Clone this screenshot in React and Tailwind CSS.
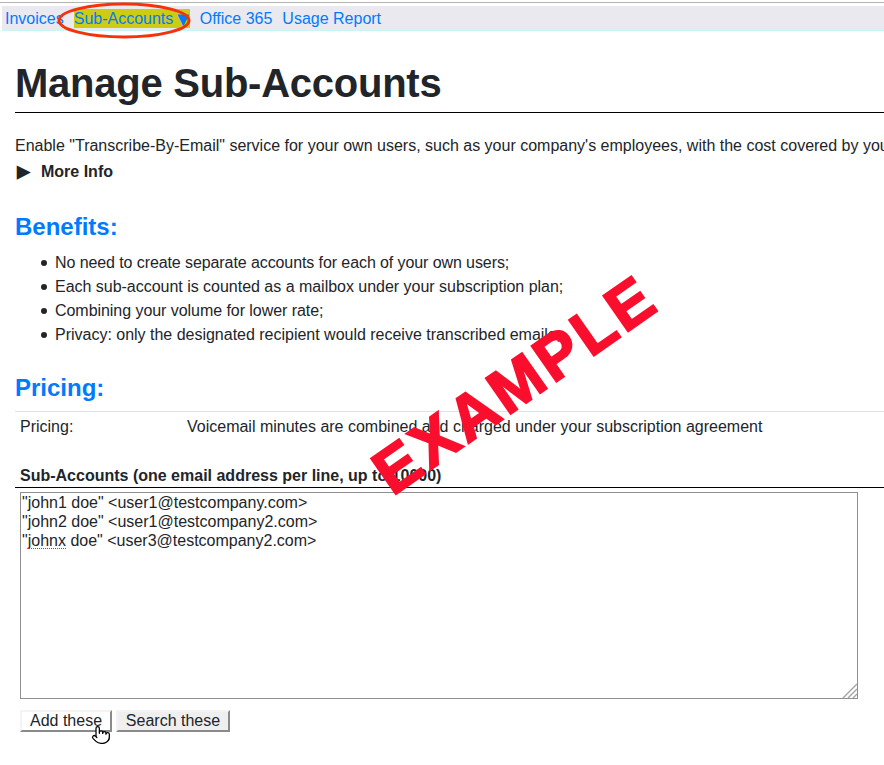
import { Pointer } from 'lucide-react'

const benefits = [
  { text: 'No need to create separate accounts for each of your own users;', fit: 'tracking-[-0.09px]' },
  { text: 'Each sub-account is counted as a mailbox under your subscription plan;', fit: 'tracking-[-0.02px]' },
  { text: 'Combining your volume for lower rate;', fit: 'tracking-[-0.05px]' },
  { text: 'Privacy: only the designated recipient would receive transcribed emails;', fit: 'tracking-[-0.01px]' },
]

const addresses = `"john1 doe" <user1@testcompany.com>
"john2 doe" <user1@testcompany2.com>
"johnx doe" <user3@testcompany2.com>`

export default function App() {
  return (
    <div className="relative h-[765px] w-[884px] overflow-hidden bg-white font-['Liberation_Sans',Arial,sans-serif] text-base text-[#212529]">
      <div className="mt-[2px] h-[1px] bg-[#b5b5ae]" />
      <nav className="ml-[2px] mt-[3px] flex h-[25px] items-center whitespace-nowrap border-b border-[#c8f5f8] bg-[#e9e9ef] pl-[3px] text-[#007bff]">
        <a className="mt-[1px]">Invoices</a>
        <a className="ml-[10px] flex h-[19px] w-[116px] items-center bg-[#cccc14] pt-[2px] leading-none">
          Sub-Accounts<span className="text-[20px]">▼</span>
        </a>
        <a className="ml-[10px] mt-[1px]">Office 365</a>
        <a className="ml-[10px] mt-[1px]">Usage Report</a>
      </nav>

      <main className="pl-[15px]">
        <h1 className="mt-[28px] border-b border-black pb-[5px] text-[40px] leading-[48px] font-bold tracking-[-0.25px]">Manage Sub-Accounts</h1>
        <p className="mt-[21px] whitespace-nowrap leading-[24px]">
          Enable "Transcribe-By-Email" service for your own users, such as your company's employees, with the cost covered by your account.
        </p>
        <div className="mt-[2px] flex h-[24px] items-center font-bold">
          <span className="ml-[2px] w-[24px] text-[17px]">▶</span>
          More Info
        </div>

        <h3 className="mt-[29px] text-2xl leading-[28px] font-bold text-[#007bff]">Benefits:</h3>
        <ul className="mt-[10px] ml-[26px]">
          {benefits.map((item) => (
            <li key={item.text} className={`flex h-[24px] items-center ${item.fit}`}>
              <span className="mr-[8px] h-[6px] w-[6px] rounded-full bg-[#212529]" />
              {item.text}
            </li>
          ))}
        </ul>

        <h3 className="mt-[27px] text-2xl leading-[28px] font-bold text-[#007bff]">Pricing:</h3>
        <div className="mt-[9px] flex h-[30px] items-center border-t border-[#dee2e6] pl-[5px]">
          <span className="w-[167px]">Pricing:</span>
          <span>Voicemail minutes are combined and charged under your subscription agreement</span>
        </div>

        <div className="mt-[24px] border-b border-black pl-[5px] leading-[22px] font-bold">
          Sub-Accounts (one email address per line, up to 10000)
        </div>

        <div className="relative ml-[5px] mt-[4px] w-[838px]">
          <textarea
            defaultValue={addresses}
            spellCheck={false}
            className="block h-[207px] w-[838px] resize-none border border-[#8f8f8f] px-[1px] py-0 text-base leading-[19px] text-[#212529] outline-none"
          />
          <span className="absolute left-[8px] top-[56px] h-0 w-[38px] border-b border-dotted border-[#d03030]" />
          <svg className="absolute bottom-[1px] right-[1px]" width="15" height="15" viewBox="0 0 15 15" stroke="#a8a8a8" strokeWidth="1.5">
            <path d="M1 15L15 1M6 15L15 6M11 15L15 11" />
          </svg>
        </div>

        <div className="ml-[5px] mt-[11px] flex gap-[4px]">
          <button className="h-[22px] w-[92px] border-2 border-t-[#f4f4f4] border-r-[#8a8a8a] border-b-[#8a8a8a] border-l-[#f4f4f4] bg-white leading-none text-[#212529]">
            Add these
          </button>
          <button className="h-[22px] w-[114px] border-2 border-t-[#f4f4f4] border-r-[#8a8a8a] border-b-[#8a8a8a] border-l-[#f4f4f4] bg-[#efefef] leading-none text-[#212529]">
            Search these
          </button>
        </div>
      </main>

      {/* annotation oval round the menu item */}
      <svg className="absolute left-[55px] top-0" width="140" height="42" viewBox="0 0 140 42">
        <ellipse cx="69" cy="20.5" rx="65" ry="16.5" fill="none" stroke="#f5320a" strokeWidth="3" />
      </svg>

      <div className="absolute left-[345px] top-[353px] w-[340px] -rotate-[35deg] text-center text-[63px] leading-none font-bold tracking-[3.5px] text-[#f90f2d] [-webkit-text-stroke:2px_#f90f2d]">
        EXAMPLE
      </div>

      <Pointer className="absolute left-[91px] top-[725px] h-[20px] w-[20px] fill-white text-black" strokeWidth={1.5} />
    </div>
  )
}
